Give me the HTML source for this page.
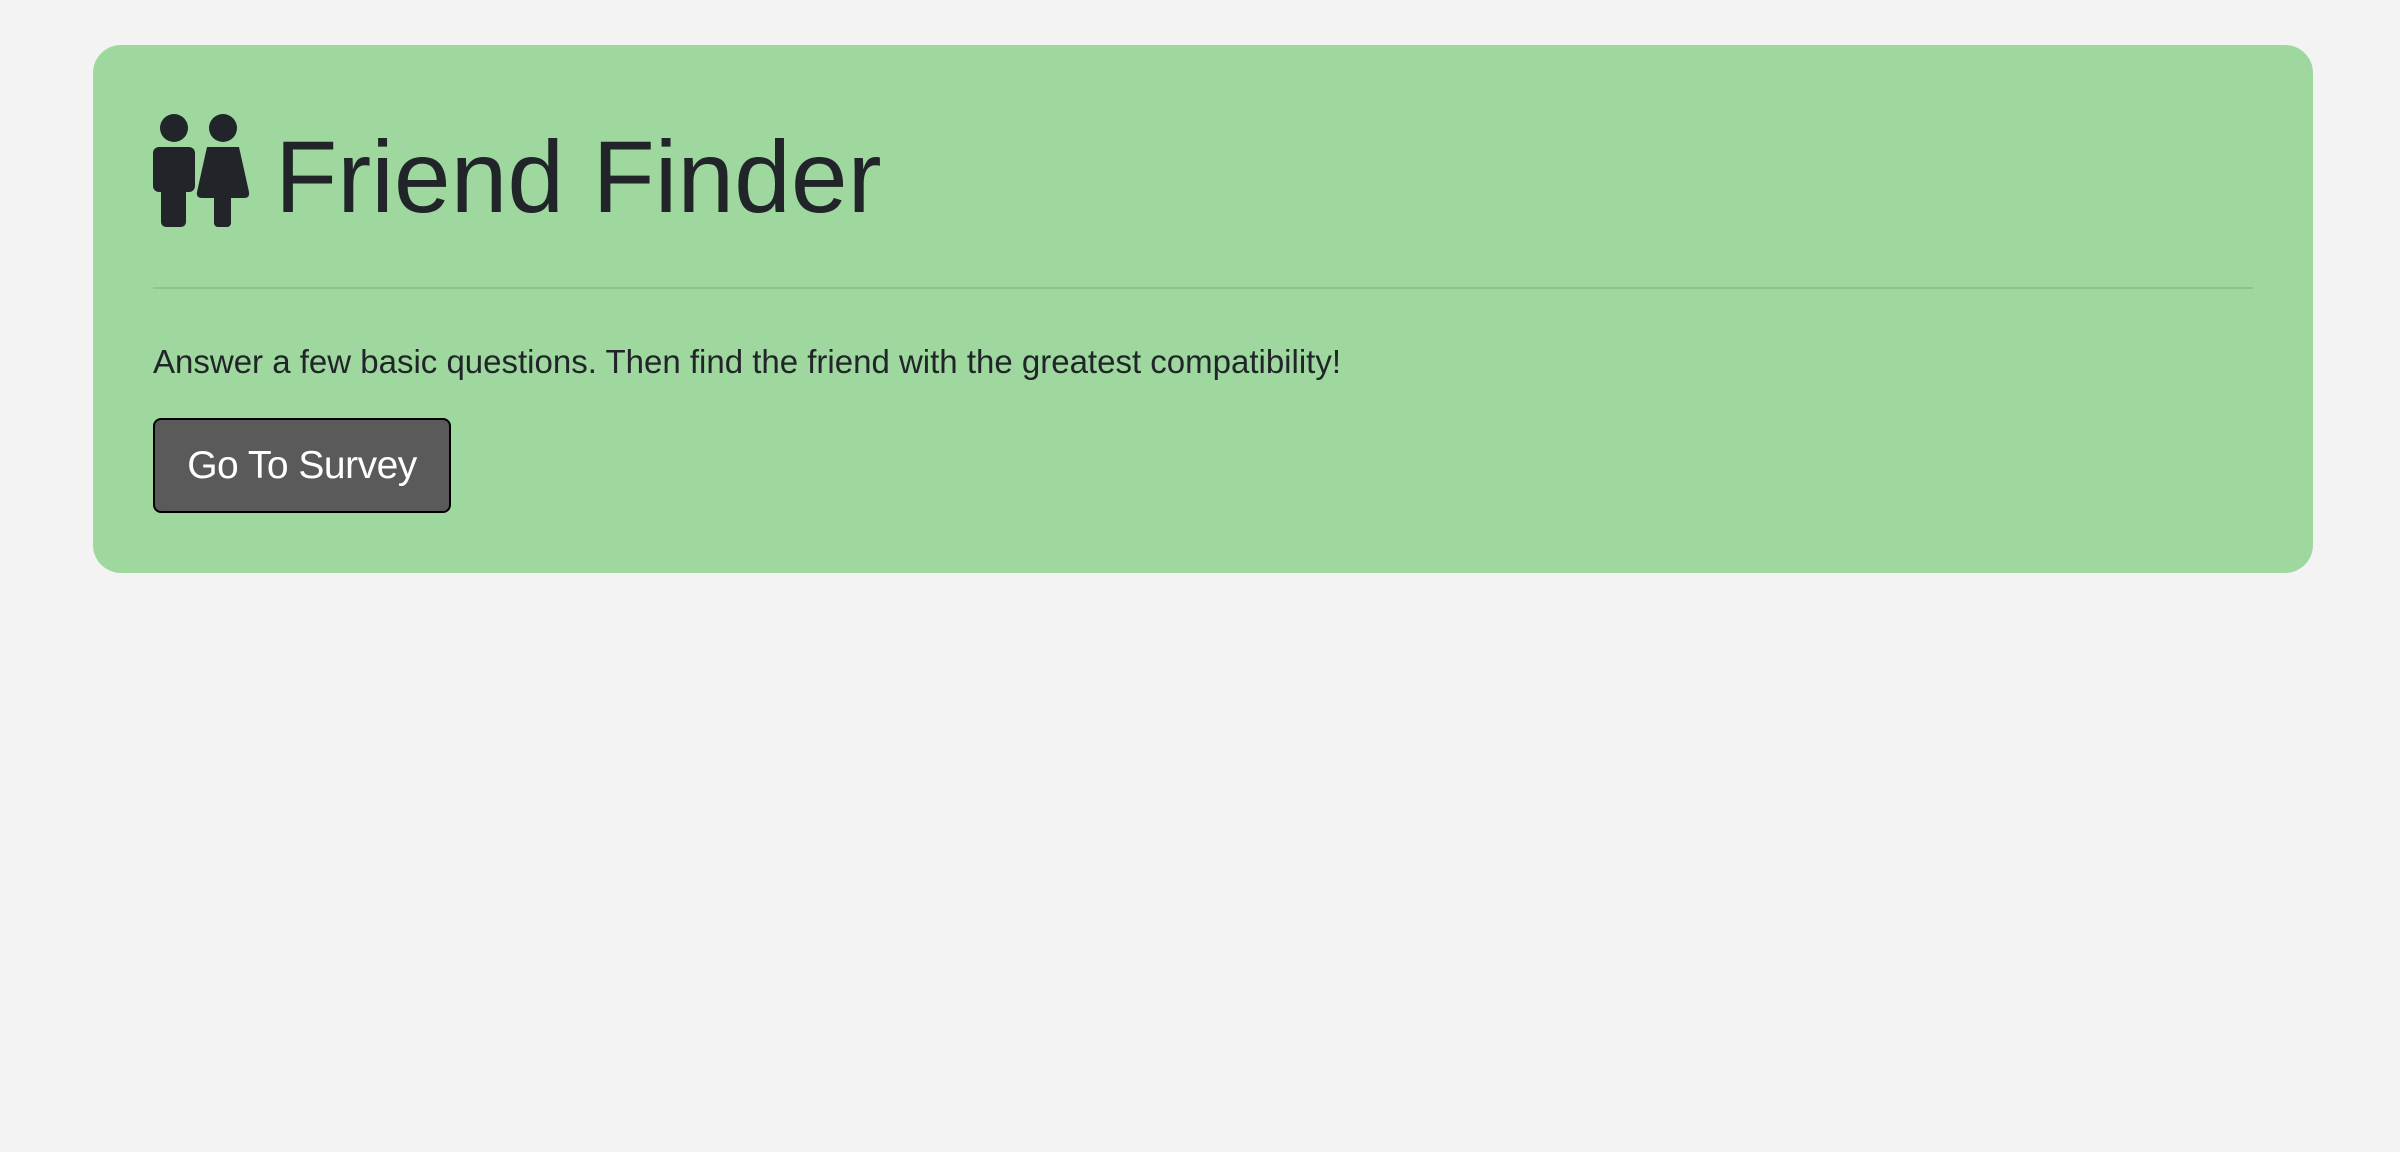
<!DOCTYPE html>
<html><head><style>
body{margin:0;width:2400px;height:1152px;background:#f3f3f3;font-family:"Liberation Sans",sans-serif;position:relative;overflow:hidden}
.card{position:absolute;left:93px;top:45px;width:2220px;height:528px;background:#9ed89f;border-radius:28px}
h1{position:absolute;left:275px;top:107px;margin:0;font-size:102px;font-weight:normal;color:#212529;letter-spacing:0px;line-height:140px;white-space:nowrap}
.hr{position:absolute;left:153px;top:287px;width:2100px;height:2px;background:#8cc48e}
p{position:absolute;left:153px;top:341px;margin:0;font-size:33px;color:#212529;line-height:42px;white-space:nowrap;letter-spacing:0px}
.btn{position:absolute;left:153px;top:418px;width:298px;height:95px;box-sizing:border-box;background:#5a5a5a;border:2px solid #000;border-radius:8px;color:#fff;font-size:39px;line-height:91px;text-align:center;letter-spacing:-0.5px}
</style></head><body>
<div class="card"></div>
<svg style="position:absolute;left:0;top:0" width="400" height="300">
<g fill="#212529">
<circle cx="174" cy="128" r="14"/>
<rect x="153" y="147" width="42" height="45" rx="6"/>
<rect x="161" y="170" width="25" height="57" rx="5"/>
<circle cx="223" cy="128" r="14"/>
<path d="M207 147 L239 147 L249 192 Q250 198 244 198 L202 198 Q196 198 197 192 Z"/>
<rect x="214" y="190" width="17" height="37" rx="4"/>
</g></svg>
<h1>Friend Finder</h1>
<div class="hr"></div>
<p>Answer a few basic questions. Then find the friend with the greatest compatibility!</p>
<div class="btn">Go To Survey</div>
</body></html>
